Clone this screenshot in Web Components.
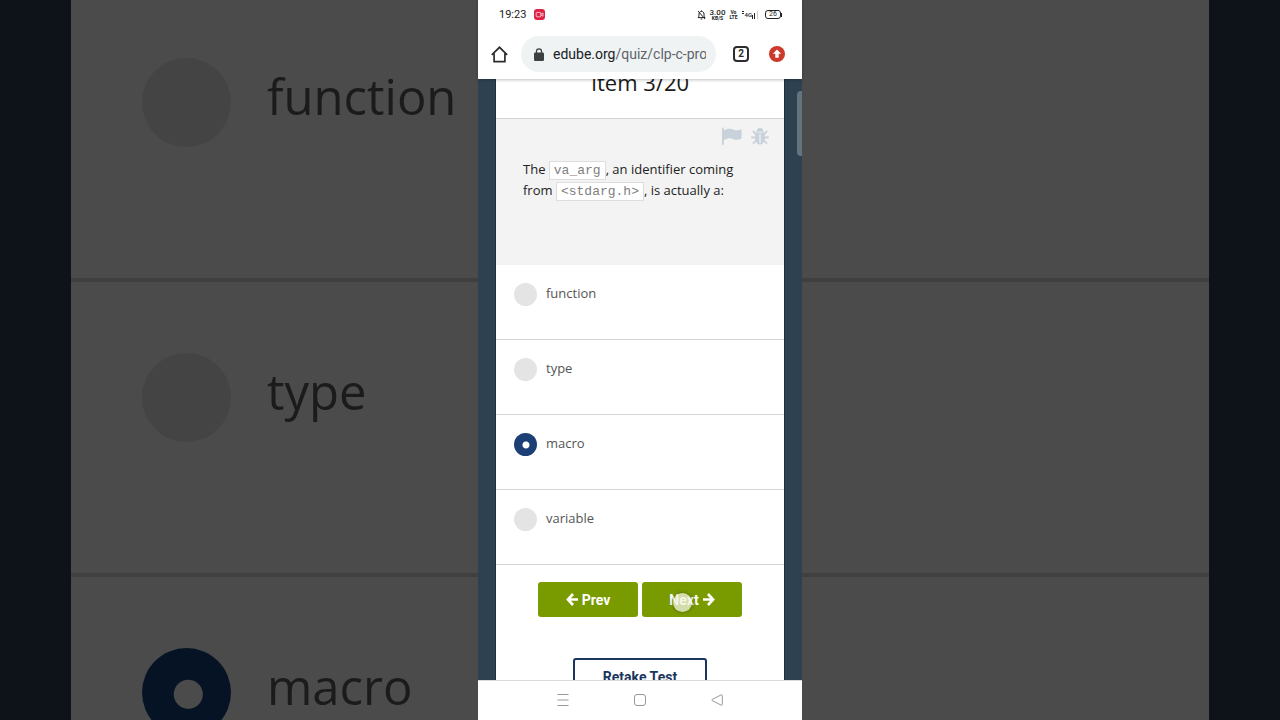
<!DOCTYPE html>
<html lang="en">
<head>
<meta charset="utf-8">
<meta name="viewport" content="width=device-width, initial-scale=1">
<title>Item 3/20</title>
<style>
    body {
        margin: 0;
        background: #0d1319;
        font-family: "Open Sans", sans-serif;
    }
</style>
</head>
<body>
<quiz-stage>
    <quiz-backdrop slot="backdrop" inert></quiz-backdrop>
    <phone-screen>
        <status-bar slot="top"></status-bar>
        <browser-bar slot="top" host="edube.org" path="/quiz/clp-c-pro"></browser-bar>
        <quiz-card heading="Item 3/20">
            <quiz-question slot="question">The <code>va_arg</code>, an identifier coming from <code>&lt;stdarg.h&gt;</code>, is actually a:</quiz-question>
            <quiz-option value="function">function</quiz-option>
            <quiz-option value="type">type</quiz-option>
            <quiz-option value="macro" checked>macro</quiz-option>
            <quiz-option value="variable">variable</quiz-option>
            <quiz-actions slot="actions"></quiz-actions>
        </quiz-card>
        <system-nav slot="bottom"></system-nav>
    </phone-screen>
</quiz-stage>

<script>
class QuizStage extends HTMLElement {
    constructor() {
        super();
        this.attachShadow({ mode: 'open' });
    }

    connectedCallback() {
        this.shadowRoot.innerHTML = `
            <style>
                :host {
                    display: grid;
                    height: 100vh;
                    overflow: hidden;
                }
                .layer {
                    grid-area: 1 / 1;
                    min-height: 0;
                }
                .front {
                    display: flex;
                    justify-content: center;
                    z-index: 1;
                }
            </style>
            <div class="layer"><slot name="backdrop"></slot></div>
            <div class="layer front"><slot></slot></div>
        `;
    }
}

// Enlarged, dimmed copy of the answers behind the phone
class QuizBackdrop extends HTMLElement {
    constructor() {
        super();
        this.attachShadow({ mode: 'open' });
    }

    connectedCallback() {
        this.shadowRoot.innerHTML = `
            <style>
                :host {
                    display: block;
                    height: 100%;
                    padding: 0 71px;
                    overflow: hidden;
                    box-sizing: border-box;
                }
                .panel {
                    min-height: 100%;
                    margin-top: -13px;
                    background: #4b4b4b;
                }
                quiz-option {
                    --row-height: 295px;
                    --row-padding: 71px;
                    --row-gap: 36px;
                    --line: 4px;
                    --line-color: #404040;
                    --dot: 89px;
                    --dot-color: #444444;
                    --dot-checked: #061324;
                    --dot-hole: #4b4b4b;
                    --hole: 14px;
                    --text-size: 49px;
                    --text-line: 77px;
                    --text-color: #1b1b1b;
                }
            </style>
            <div class="panel">
                <quiz-option value="function">function</quiz-option>
                <quiz-option value="type">type</quiz-option>
                <quiz-option value="macro" checked>macro</quiz-option>
            </div>
        `;
    }
}

class PhoneScreen extends HTMLElement {
    constructor() {
        super();
        this.attachShadow({ mode: 'open' });
    }

    connectedCallback() {
        // 45vh keeps the 9:20 shape at full height
        this.shadowRoot.innerHTML = `
            <style>
                :host {
                    display: flex;
                    flex-direction: column;
                    width: 45vh;
                    height: 100%;
                    background: #fff;
                }
                header {
                    position: relative;
                    z-index: 1;
                    background: #fff;
                    box-shadow: 0 1px 3px rgba(0, 0, 0, 0.25);
                }
                main {
                    position: relative;
                    flex: 1;
                    min-height: 0;
                    padding: 0 18px;
                    overflow: hidden;
                    background: #2e4150;
                }
                .handle {
                    position: absolute;
                    top: 12px;
                    right: 0;
                    width: 5px;
                    height: 65px;
                    border-radius: 4px 0 0 4px;
                    background: #64747f;
                }
            </style>
            <header><slot name="top"></slot></header>
            <main>
                <slot></slot>
                <div class="handle"></div>
            </main>
            <slot name="bottom"></slot>
        `;
    }
}

class StatusBar extends HTMLElement {
    constructor() {
        super();
        this.attachShadow({ mode: 'open' });
    }

    connectedCallback() {
        this.shadowRoot.innerHTML = `
            <style>
                :host {
                    display: flex;
                    align-items: center;
                    height: 29px;
                    padding: 0 20px 0 21px;
                    font: 11px/29px Roboto, sans-serif;
                    color: #222;
                }
                svg {
                    display: block;
                }
                .rec {
                    margin-left: 8px;
                }
                .right {
                    display: flex;
                    align-items: center;
                    gap: 4px;
                    margin-left: auto;
                }
                .stack {
                    display: grid;
                    justify-items: center;
                    font-weight: 700;
                    font-size: 5px;
                    line-height: 5px;
                }
                .stack b {
                    font-weight: 500;
                    font-size: 8px;
                    line-height: 7px;
                }
                .lte {
                    font-size: 5px;
                }
                .signal {
                    display: flex;
                    align-items: flex-end;
                    font-weight: 500;
                    font-size: 6px;
                    line-height: 10px;
                }
                .battery {
                    display: flex;
                    align-items: center;
                    margin-left: 2px;
                }
                .battery span {
                    width: 14px;
                    border: 1px solid #222;
                    border-radius: 3px;
                    font-size: 7px;
                    line-height: 7px;
                    text-align: center;
                }
                .battery::after {
                    content: "";
                    width: 1px;
                    height: 4px;
                    background: #222;
                }
            </style>
            <time>19:23</time>
            <svg class="rec" width="11" height="11" viewBox="0 0 11 11">
                <rect width="11" height="11" rx="3" fill="#dd2345"/>
                <rect x="2.2" y="3.4" width="4.6" height="4.4" rx="1" fill="none" stroke="#fbd5dc" stroke-width=".9"/>
                <path d="M7 5.2l2-1.2v3.2l-2-1.2" fill="none" stroke="#fbd5dc" stroke-width=".8"/>
            </svg>
            <div class="right">
                <svg width="9" height="10" viewBox="0 0 9 10" fill="none" stroke="#222">
                    <path d="M1 7.6h7c-1-1-1-1.800-1-3.600C7 2.500 6 1.500 4.500 1.500S2 2.500 2 4c0 1.800 0 2.600-1 3.600zM3.700 9h1.600M1 1l7 8M4.500 .4v1"/>
                </svg>
                <div class="stack"><b>3.00</b><span>KB/S</span></div>
                <div class="stack lte"><span>Vo</span><span>LTE</span></div>
                <div class="signal">
                    <svg width="3" height="10" viewBox="0 0 3 10" fill="#222">
                        <path d="M0 1h2v1H0zM0 3h2v1H0z"/>
                    </svg>
                    <span>4G</span>
                    <svg width="7" height="10" viewBox="0 0 7 10" fill="#222">
                        <path d="M0 5h1v4H0zM2 3h1v6H2z"/>
                        <path d="M5 1h1v8H5z" fill="#ccc"/>
                    </svg>
                </div>
                <div class="battery"><span>26</span></div>
            </div>
        `;
    }
}

class BrowserBar extends HTMLElement {
    constructor() {
        super();
        this.attachShadow({ mode: 'open' });
    }

    connectedCallback() {
        this.shadowRoot.innerHTML = `
            <style>
                :host {
                    display: flex;
                    align-items: center;
                    height: 50px;
                    padding: 0 17px 0 13px;
                    font-family: Roboto, sans-serif;
                }
                button {
                    display: block;
                    padding: 0;
                    border: 0;
                    background: none;
                }
                svg {
                    display: block;
                }
                .omnibox {
                    display: flex;
                    flex: 1;
                    align-items: center;
                    min-width: 0;
                    height: 36px;
                    margin: 0 17px 0 13px;
                    padding: 0 10px 0 13px;
                    border-radius: 18px;
                    box-sizing: border-box;
                    background: #eff3f4;
                    font-size: 14px;
                    line-height: 20px;
                }
                label {
                    margin-left: 9px;
                    color: #202124;
                }
                input {
                    flex: 1;
                    min-width: 0;
                    padding: 0;
                    border: 0;
                    outline: 0;
                    background: none;
                    font: inherit;
                    color: #5f6368;
                }
                .tabs {
                    width: 16px;
                    height: 16px;
                    margin-right: 20px;
                    border: 2px solid #2b2d30;
                    border-radius: 4px;
                    box-sizing: border-box;
                    font: 700 10px/12px Roboto, sans-serif;
                    color: #2b2d30;
                }
            </style>
            <button aria-label="Home">
                <svg width="17" height="17" viewBox="0 0 17 17" fill="none" stroke="#2b2d30" stroke-width="1.700">
                    <path d="M.8 8.900L8.500 1.300l7.700 7.600M3.100 7.400v8.300h10.800V7.400"/>
                </svg>
            </button>
            <div class="omnibox">
                <svg width="10" height="13" viewBox="0 0 10 13">
                    <rect y="4.500" width="10" height="8.500" rx="1.300" fill="#3c4043"/>
                    <path d="M2.500 5V3.200a2.500 2.400 0 0 1 5 0V5" fill="none" stroke="#3c4043" stroke-width="1.300"/>
                </svg>
                <label for="url">${this.getAttribute('host')}</label>
                <input id="url" type="text" value="${this.getAttribute('path')}">
            </div>
            <button class="tabs" aria-label="Open tabs">2</button>
            <button aria-label="Update">
                <svg width="16" height="16" viewBox="0 0 16 16">
                    <circle cx="8" cy="8" r="8" fill="#cb3a2b"/>
                    <path d="M8 3.400l4.200 4.400H9.700v4H6.300v-4H3.800z" fill="#fff"/>
                </svg>
            </button>
        `;
    }
}

class QuizCard extends HTMLElement {
    constructor() {
        super();
        this.attachShadow({ mode: 'open' });
    }

    connectedCallback() {
        this.shadowRoot.innerHTML = `
            <style>
                :host {
                    display: block;
                    min-height: 100%;
                    background: #fff;
                    box-shadow: 0 0 0 1px #1d3040;
                }
                /* scrolled partly under the browser bar */
                h1 {
                    margin: -12px 0 0;
                    padding-bottom: 21px;
                    border-bottom: 1px solid #d4d4d4;
                    font-size: 22px;
                    line-height: 30px;
                    font-weight: 400;
                    text-align: center;
                    color: #1a1a1a;
                }
                .wrap {
                    display: flow-root;
                }
                fieldset {
                    min-width: 0;
                    margin: 0;
                    padding: 0;
                    border: 0;
                }
            </style>
            <div class="wrap">
                <h1>${this.getAttribute('heading')}</h1>
                <slot name="question"></slot>
                <fieldset aria-label="Answers"><slot></slot></fieldset>
                <slot name="actions"></slot>
            </div>
        `;
    }
}

class QuizQuestion extends HTMLElement {
    constructor() {
        super();
        this.attachShadow({ mode: 'open' });
    }

    connectedCallback() {
        this.shadowRoot.innerHTML = `
            <style>
                :host {
                    display: block;
                    min-height: 146px;
                    padding: 8px 15px 0 27px;
                    box-sizing: border-box;
                    background: #f3f3f3;
                    color: #222;
                }
                .tools {
                    display: flex;
                    justify-content: flex-end;
                    gap: 9px;
                }
                button {
                    padding: 0;
                    border: 0;
                    background: none;
                }
                svg {
                    display: block;
                }
                p {
                    margin: 14px 12px 0 0;
                    font-size: 13px;
                    line-height: 21px;
                }
                ::slotted(code) {
                    padding: 1px 4px;
                    border: 1px solid #ddd;
                    background: #fff;
                    font: 13px "Liberation Mono", monospace;
                    color: #808080;
                }
            </style>
            <div class="tools">
                <button aria-label="Flag this question">
                    <svg width="20" height="18" viewBox="0 0 20 18" fill="#c9d2da">
                        <path d="M0 1.500a1 1 0 0 1 2 0V17a1 1 0 0 1-2 0z"/>
                        <path d="M2 3.300C6 .9 9 1.500 12 2.800c2.500 1 4.500.6 7.500-.8v9.400c-3 1.600-5.200 1.900-7.800.8-3-1.300-5.700-1.200-9.700.8z"/>
                    </svg>
                </button>
                <button aria-label="Report a bug">
                    <svg width="18" height="18" viewBox="0 0 18 18">
                        <path d="M5.500 4.700a3.500 3.700 0 0 1 7 0z" fill="#c9d2da"/>
                        <path d="M4.200 5.500h9.600v6.500c0 2.800-1.800 5.500-4.800 5.500s-4.800-2.700-4.800-5.500z" fill="#c9d2da"/>
                        <path d="M5 7L1.800 3.900M13 7l3.200-3.100M5 10.500H.3M13 10.500h4.700M5 13.500L2 16.700M13 13.500l3 3.200" fill="none" stroke="#c9d2da" stroke-width="1.800"/>
                        <path d="M9 6.800v9.200" stroke="#f3f3f3" stroke-width="1.200"/>
                    </svg>
                </button>
            </div>
            <p><slot></slot></p>
        `;
    }
}

class QuizOption extends HTMLElement {
    constructor() {
        super();
        this.attachShadow({ mode: 'open' });
    }

    connectedCallback() {
        this.shadowRoot.innerHTML = `
            <style>
                :host {
                    display: block;
                    height: var(--row-height, 75px);
                    padding: var(--row-padding, 18px);
                    border-bottom: var(--line, 1px) solid var(--line-color, #d4d4d4);
                    box-sizing: border-box;
                }
                label {
                    display: flex;
                    gap: var(--row-gap, 9px);
                    font-size: var(--text-size, 13px);
                    line-height: var(--text-line, 21px);
                    color: var(--text-color, #555);
                }
                input {
                    flex: none;
                    width: var(--dot, 23px);
                    height: var(--dot, 23px);
                    margin: 0;
                    border-radius: 50%;
                    appearance: none;
                    background: var(--dot-color, #e4e4e4);
                }
                input:checked {
                    background: radial-gradient(circle at 52% 52%, var(--dot-hole, #fff) var(--hole, 3px), var(--dot-checked, #1c3f75) calc(var(--hole, 3px) + 1px));
                }
            </style>
            <label>
                <input type="radio" name="answer" value="${this.getAttribute('value')}">
                <span><slot></slot></span>
            </label>
        `;
        const input = this.shadowRoot.querySelector('input');
        input.checked = this.hasAttribute('checked');
        // radios sit in separate roots, so clear the siblings by hand
        input.addEventListener('change', () => {
            this.parentElement.querySelectorAll('quiz-option').forEach((option) => {
                if (option !== this) {
                    option.shadowRoot.querySelector('input').checked = false;
                }
            });
        });
    }
}

class QuizActions extends HTMLElement {
    constructor() {
        super();
        this.attachShadow({ mode: 'open' });
    }

    connectedCallback() {
        this.shadowRoot.innerHTML = `
            <style>
                :host {
                    display: grid;
                    justify-items: center;
                    gap: 41px;
                    padding-top: 17px;
                }
                .pager {
                    display: flex;
                    gap: 4px;
                }
                button {
                    font: 700 14px/20px Roboto, sans-serif;
                    border-radius: 3px;
                    box-sizing: border-box;
                }
                .pager button {
                    position: relative;
                    display: flex;
                    align-items: center;
                    justify-content: center;
                    gap: 4px;
                    width: 100px;
                    height: 35px;
                    padding: 0;
                    border: 0;
                    background: #799b00;
                    color: #fff;
                }
                .retake {
                    padding: 7px 28px;
                    border: 2px solid #1a355e;
                    background: #fff;
                    color: #1a355e;
                }
                .touch {
                    position: absolute;
                    top: 11px;
                    left: 31px;
                    width: 19px;
                    height: 19px;
                    border-radius: 50%;
                    background: rgba(240, 243, 225, 0.75);
                    box-shadow: 0 0 3px 1px rgba(60, 70, 30, 0.4);
                }
            </style>
            <div class="pager">
                <button>
                    <svg width="12" height="13" viewBox="0 0 12 13" fill="none" stroke="#fff" stroke-width="2.600">
                        <path d="M7 1L1.900 6.500L7 12M2 6.500h10"/>
                    </svg>
                    Prev
                </button>
                <button>
                    Next
                    <svg width="12" height="13" viewBox="0 0 12 13" fill="none" stroke="#fff" stroke-width="2.600">
                        <path d="M5 1l5.100 5.500L5 12M10 6.500H0"/>
                    </svg>
                    <span class="touch"></span>
                </button>
            </div>
            <button class="retake">Retake Test</button>
        `;
    }
}

class SystemNav extends HTMLElement {
    constructor() {
        super();
        this.attachShadow({ mode: 'open' });
    }

    connectedCallback() {
        this.shadowRoot.innerHTML = `
            <style>
                :host {
                    display: grid;
                    grid-template-columns: repeat(3, 1fr);
                    height: 40px;
                    padding: 0 46px;
                    box-shadow: inset 0 1px #d9dcde;
                    box-sizing: border-box;
                    background: #fff;
                }
                button {
                    display: grid;
                    place-items: center;
                    padding: 0;
                    border: 0;
                    background: none;
                }
                svg {
                    fill: none;
                    stroke: #999;
                }
            </style>
            <button aria-label="Recent apps">
                <svg width="12" height="12" viewBox="0 0 12 12"><path d="M.5 .5h11M.5 6h11M.5 11.500h11"/></svg>
            </button>
            <button aria-label="Home">
                <svg width="12" height="12" viewBox="0 0 12 12"><rect x=".5" y=".5" width="11" height="11" rx="2.500"/></svg>
            </button>
            <button aria-label="Back">
                <svg width="12" height="12" viewBox="0 0 12 12"><path d="M10.300 .8L1.200 5.400q-.9.600 0 1.200l9.100 4.600q1 .3 1-.7v-9q0-1-1-.7z"/></svg>
            </button>
        `;
    }
}

customElements.define('quiz-stage', QuizStage);
customElements.define('quiz-backdrop', QuizBackdrop);
customElements.define('phone-screen', PhoneScreen);
customElements.define('status-bar', StatusBar);
customElements.define('browser-bar', BrowserBar);
customElements.define('quiz-card', QuizCard);
customElements.define('quiz-question', QuizQuestion);
customElements.define('quiz-option', QuizOption);
customElements.define('quiz-actions', QuizActions);
customElements.define('system-nav', SystemNav);
</script>
</body>
</html>
